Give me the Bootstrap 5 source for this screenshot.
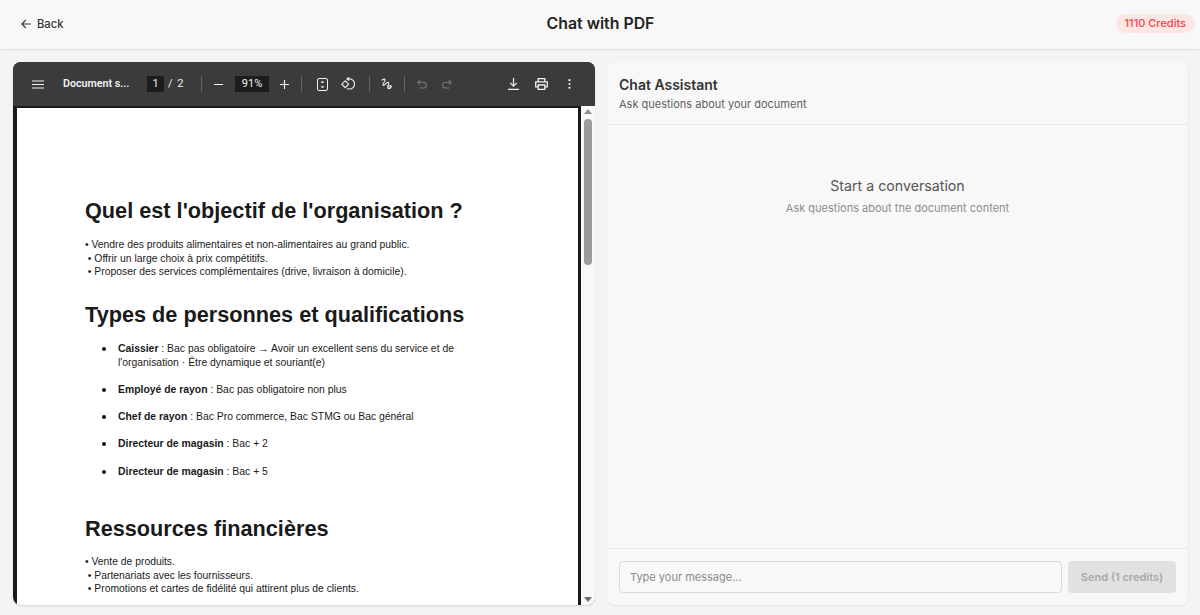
<!DOCTYPE html>
<html lang="en">
<head>
<meta charset="utf-8">
<title>Chat with PDF</title>
<link rel="stylesheet" href="https://cdn.jsdelivr.net/npm/bootstrap@5.3.0/dist/css/bootstrap.min.css">
<style>
html,body{height:615px;overflow:hidden}
body{background:#f4f4f3;font-family:Inter,"Liberation Sans",sans-serif;color:#1f1f1f}
.top-bar{height:50px;background:#f8f8f8;border-bottom:1px solid #e2e2e0;box-shadow:0 1px 2px rgba(0,0,0,.04);padding:0 5px 2px 21px}
.top-bar .back-link{font-size:11.2px;font-weight:500;color:#333;gap:6px;text-decoration:none;padding-top:2px}
.app-title{font-size:15.85px;font-weight:600;line-height:24px;color:#222;left:1px;right:0}
.credit-pill{background:#fee6e5;color:#f0474c;font-size:11px;font-weight:500;line-height:19px;padding:0 9px;border-radius:10px}
.work-area{height:565px;padding:12px 12px 10px 13px;gap:12px}
.pdf-pane{width:582px;border-radius:8px;overflow:hidden;background:#2a2a2e;box-shadow:0 1px 2px rgba(0,0,0,.12)}
.pdf-bar{height:44px;background:#3b3b3b;color:#f1f1f1;padding-left:19px;flex:none}
.pdf-bar svg{display:block;flex:none}
.pdf-name{font-size:10.7px;font-weight:600;width:68px;margin-left:19px;font-family:Roboto,sans-serif;white-space:nowrap}
.pg-box{background:#1c1c1c;color:#f1f1f1;font-size:11px;height:16px;line-height:16px;text-align:center;font-family:Roboto,sans-serif}
.pg-num{width:17px;margin-left:16px}
.pg-of{font-size:11px;font-family:Roboto,sans-serif;margin-left:4px;width:33px;word-spacing:2px}
.bar-sep{width:1px;height:16px;background:#666;flex:none}
.zoom-val{width:34px;margin-left:12px}
.pdf-body{flex:1;min-height:0;background:#fff}
.page-view{flex:1;min-width:0;background:#fff;border:solid #1a1a1a;border-width:2px 3px 0 4px;overflow:hidden;font-family:"Liberation Sans",Arial,sans-serif;color:#1a1a1a;padding:88.500px 0 0 68px}
.scroll-rail{width:14px;background:#f8f8f8;flex:none}
.scroll-thumb{width:8px;height:146px;background:#9b9b9b;border-radius:4px;margin:5px auto 0}
.scroll-tri{width:0;height:0;border-left:4px solid transparent;border-right:4px solid transparent;margin:0 auto}
.scroll-tri.to-up{border-bottom:5px solid #8e8e8e;margin-top:3px}
.scroll-tri.to-down{border-top:5px solid #6f6f6f;margin-bottom:3px}
.doc-h{font-size:21.7px;font-weight:700;line-height:28px;margin:0;color:#1a1a1a;white-space:nowrap}
.doc-p{font-size:10.35px;line-height:13.500px;margin:0;white-space:pre}
.doc-list{list-style:none;padding:0;margin:0 0 0 15px;font-size:10.4px;line-height:13.700px;width:372px}
.doc-list li{position:relative;padding-left:18px;margin-bottom:13.500px}
.doc-list li::before{content:"";position:absolute;left:1.500px;top:5px;width:4px;height:4px;border-radius:50%;background:#111}
.chat-pane{flex:1;min-width:0;background:#f8f8f8;border-radius:8px;box-shadow:0 1px 2px rgba(0,0,0,.08)}
.chat-head{height:63px;border-bottom:1px solid #ebebea;padding:14px 12px 0}
.chat-head h2{font-size:14px;font-weight:600;line-height:17px;margin:0;color:#333}
.chat-head p{font-size:11px;line-height:16px;margin:3px 0 0;color:#5f5f5f}
.chat-empty{flex:1;min-height:0;text-align:center;padding-top:52px}
.chat-empty h3{font-size:14.2px;font-weight:400;line-height:17px;margin:0;color:#555}
.chat-empty p{font-size:11px;line-height:16px;margin:6px 0 0;color:#8d8d8d}
.chat-foot{height:57px;border-top:1px solid #ebebea;padding:12px 12px 0 12px;gap:6px}
.chat-foot .form-control{height:32px;flex:1;background:#f8f8f8;border:1px solid #d9d9d7;border-radius:4px;font-size:11px;padding:0 10px;box-shadow:none}
.chat-foot .form-control::placeholder{color:#8a8a8a}
.chat-foot .btn{width:108px;height:32px;padding:0;font-size:11px;font-weight:600;background:#e1e1df;border:0;border-radius:4px;color:#a9a9a9;opacity:1}
</style>
</head>
<body>
<header class="top-bar d-flex align-items-center justify-content-between position-relative">
  <a class="back-link d-flex align-items-center" href="#">
    <svg width="10" height="10" viewBox="0 0 10 10" fill="none" stroke="#333" stroke-width="1.1"><path d="M10 5H1M4.800 1 .9 5l3.900 4"/></svg>
    <span>Back</span>
  </a>
  <div class="app-title position-absolute text-center">Chat with PDF</div>
  <span class="credit-pill position-relative">1110 Credits</span>
</header>
<main class="work-area d-flex">
  <section class="pdf-pane d-flex flex-column">
    <div class="pdf-bar d-flex align-items-center">
      <svg width="12" height="9" viewBox="0 0 12 9" stroke="#f1f1f1" stroke-width="1.1"><path d="M0 1h12M0 4.500h12M0 8h12"/></svg>
      <div class="pdf-name">Document s...</div>
      <div class="pg-box pg-num">1</div>
      <div class="pg-of">/ 2</div>
      <div class="bar-sep"></div>
      <svg style="margin-left:12px" width="9" height="9" viewBox="0 0 9 9" stroke="#f1f1f1" stroke-width="1.2"><path d="M0 4.500h9"/></svg>
      <div class="pg-box zoom-val">91%</div>
      <svg style="margin-left:11px" width="9" height="9" viewBox="0 0 9 9" stroke="#f1f1f1" stroke-width="1.2"><path d="M0 4.500h9M4.500 0v9"/></svg>
      <div class="bar-sep" style="margin-left:12px"></div>
      <svg style="margin-left:15px" width="11" height="13" viewBox="0 0 11 13" fill="none" stroke="#f1f1f1" stroke-width="1"><rect x=".5" y=".5" width="10" height="12" rx="1.500"/><path d="M4.200 4.400 5.500 3l1.300 1.400zM4.200 8.600 5.500 10l1.300-1.400z" fill="#f1f1f1" stroke-width=".6"/></svg>
      <svg style="margin-left:13px" width="14" height="14" viewBox="0 0 14 14" fill="none" stroke="#f1f1f1" stroke-width="1.100"><path d="M4.200 3.800 .8 7.200l3.400 3.400 3.400-3.400z"/><path d="M6 1.900h2.500a5 5 0 0 1 0 10.100c-1 0-1.700-.2-2.400-.6M7.900 .3 6 1.900l1.900 1.700"/></svg>
      <div class="bar-sep" style="margin-left:14px"></div>
      <svg style="margin-left:11px" width="12" height="12" viewBox="0 0 12 12" fill="none" stroke="#f1f1f1" stroke-width="1.100"><path d="M.8 2.500C2.200.4 4.800.8 3.900 2.800 3 4.800 1 6.800 2.400 7.400 3.800 8 5.900 3.400 7.400 4.500 8.800 5.500 5.400 8.500 6.900 10c1 .9 2.600-.5 3.700-2.200M6.400 8.800c1.500-.5 3.200-1.900 3.800-.6.300 1.500-1.500 2.800-3 2.300"/></svg>
      <div class="bar-sep" style="margin-left:11px"></div>
      <svg style="margin-left:12px" width="10" height="10" viewBox="0 0 10 10" fill="none" stroke="#7b7b7b" stroke-width="1.100"><path d="M1 3.300h5.500a2.800 2.800 0 0 1 0 5.700H2.500M3 1 .9 3.300 3 5.600"/></svg>
      <svg style="margin-left:15px" width="10" height="10" viewBox="0 0 10 10" fill="none" stroke="#7b7b7b" stroke-width="1.100"><path d="M9 3.300H3.500a2.800 2.800 0 0 0 0 5.700h4M7 1l2.100 2.300L7 5.600"/></svg>
      <div class="ms-auto d-flex align-items-center" style="padding-right:24px">
        <svg width="11" height="12" viewBox="0 0 11 12" fill="none" stroke="#f1f1f1" stroke-width="1.200"><path d="M5.500 0v7.800M2.200 4.800 5.500 8.100l3.300-3.300M0 11.300h11"/></svg>
        <svg style="margin-left:16px" width="13" height="12" viewBox="0 0 13 12" fill="none" stroke="#f1f1f1" stroke-width="1.300"><path d="M3.200 3.800V.7h6.600v3.100M3.200 8.800H.7V3.900h11.600v4.900H9.800M3.200 7h6.600v4.300H3.200z"/></svg>
        <svg style="margin-left:20px" width="3" height="10" viewBox="0 0 3 10" fill="#f1f1f1"><circle cx="1.500" cy="1.200" r="1.100"/><circle cx="1.500" cy="5" r="1.100"/><circle cx="1.500" cy="8.800" r="1.100"/></svg>
      </div>
    </div>
    <div class="pdf-body d-flex">
      <div class="page-view">
        <h1 class="doc-h">Quel est l'objectif de l'organisation ?</h1>
        <p class="doc-p" style="margin-top:13.500px">• Vendre des produits alimentaires et non-alimentaires au grand public.
 • Offrir un large choix à prix compétitifs.
 • Proposer des services complémentaires (drive, livraison à domicile).</p>
        <h1 class="doc-h" style="margin-top:22.500px">Types de personnes et qualifications</h1>
        <ul class="doc-list" style="margin-top:13px">
          <li><b>Caissier</b> : Bac pas obligatoire → Avoir un excellent sens du service et de l'organisation · Être dynamique et souriant(e)</li>
          <li><b>Employé de rayon</b> : Bac pas obligatoire non plus</li>
          <li><b>Chef de rayon</b> : Bac Pro commerce, Bac STMG ou Bac général</li>
          <li><b>Directeur de magasin</b> : Bac + 2</li>
          <li><b>Directeur de magasin</b> : Bac + 5</li>
        </ul>
        <h1 class="doc-h" style="margin-top:36.500px">Ressources financières</h1>
        <p class="doc-p" style="margin-top:12.500px">• Vente de produits.
 • Partenariats avec les fournisseurs.
 • Promotions et cartes de fidélité qui attirent plus de clients.</p>
      </div>
      <div class="scroll-rail d-flex flex-column">
        <div class="scroll-tri to-up"></div>
        <div class="scroll-thumb"></div>
        <div class="scroll-tri to-down mt-auto"></div>
      </div>
    </div>
  </section>
  <section class="chat-pane d-flex flex-column">
    <div class="chat-head">
      <h2>Chat Assistant</h2>
      <p>Ask questions about your document</p>
    </div>
    <div class="chat-empty">
      <h3>Start a conversation</h3>
      <p>Ask questions about the document content</p>
    </div>
    <div class="chat-foot d-flex">
      <input class="form-control" type="text" placeholder="Type your message...">
      <button class="btn" type="button" disabled>Send (1 credits)</button>
    </div>
  </section>
</main>
<script src="https://cdn.jsdelivr.net/npm/bootstrap@5.3.0/dist/js/bootstrap.bundle.min.js"></script>
</body>
</html>
